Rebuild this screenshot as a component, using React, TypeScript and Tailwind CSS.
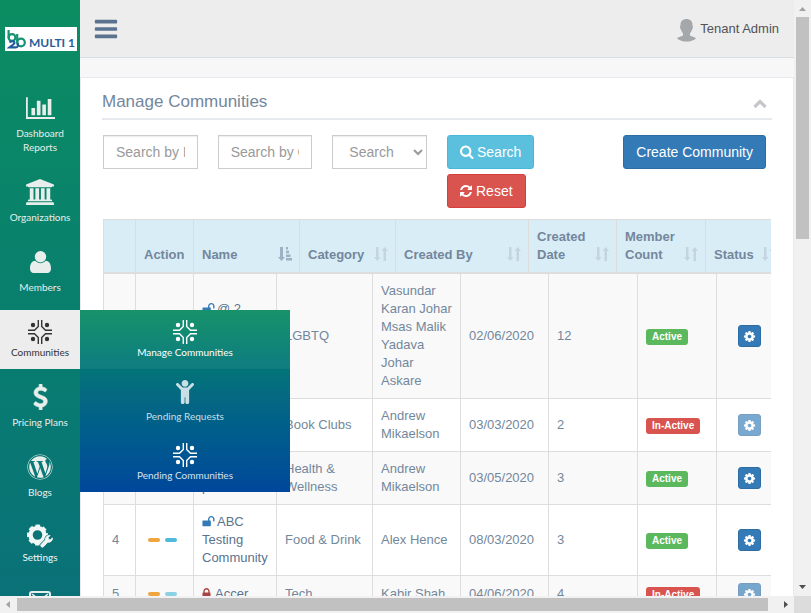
import type { ReactNode } from "react";
import { FaChild, FaWordpress } from "react-icons/fa";

type GlyphProps = { d: string; box?: string; className: string };

function Glyph({ d, box = "0 0 1792 1792", className }: GlyphProps) {
  return (
    <svg viewBox={box} className={className} fill="currentColor" aria-hidden="true">
      <path d={d} />
    </svg>
  );
}

const PATHS = {
  bars: "M1664 1344v128q0 26-19 45t-45 19h-1408q-26 0-45-19t-19-45v-128q0-26 19-45t45-19h1408q26 0 45 19t19 45zm0-512v128q0 26-19 45t-45 19h-1408q-26 0-45-19t-19-45v-128q0-26 19-45t45-19h1408q26 0 45 19t19 45zm0-512v128q0 26-19 45t-45 19h-1408q-26 0-45-19t-19-45v-128q0-26 19-45t45-19h1408q26 0 45 19t19 45z",
  search:
    "M1216 832q0-185-131.5-316.5t-316.5-131.5-316.5 131.5-131.5 316.5 131.5 316.5 316.5 131.5 316.5-131.5 131.5-316.5zm512 832q0 52-38 90t-90 38q-54 0-90-38l-343-342q-179 124-399 124-143 0-273.5-55.5t-225-150-150-225-55.5-273.5 55.5-273.5 150-225 225-150 273.5-55.5 273.5 55.5 225 150 150 225 55.5 273.5q0 220-124 399l343 343q37 37 37 90z",
  chart:
    "M640 896v512h-256v-512h256zm384-512v1024h-256v-1024h256zm1024 1152v128h-2048v-1536h128v1408h1920zm-640-896v768h-256v-768h256zm384-384v1152h-256v-1152h256z",
  bank: "M960 0l960 384v128h-128q0 26-20.5 45t-48.5 19h-1526q-28 0-48.5-19t-20.5-45h-128v-128zm-704 640h256v768h128v-768h256v768h128v-768h256v768h128v-768h256v768h59q28 0 48.5 19t20.5 45v64h-1664v-64q0-26 20.5-45t48.5-19h59v-768zm1595 960q28 0 48.5 19t20.5 45v128h-1920v-128q0-26 20.5-45t48.5-19h1782z",
  dollar:
    "M978 1185q0 153-99.5 263.5t-258.5 136.5v175q0 14-9 23t-23 9h-135q-13 0-22.5-9.5t-9.5-22.5v-175q-66-9-127.5-31t-101.5-44.5-74-48-46.5-37.5-17.5-18q-17-21-2-41l103-135q7-10 23-12 15-2 24 9l2 2q113 99 243 125 37 8 74 8 81 0 142.5-43t61.5-122q0-28-15-53t-33.5-42-58.5-37.5-66-32-80-32.5q-39-16-61.5-25t-61.5-26.5-62.5-31-56.5-35.5-53.5-42.5-43.5-49-35.5-58-21-66.5-8.5-78q0-138 98-242t255-134v-180q0-13 9.5-22.5t22.5-9.5h135q14 0 23 9t9 23v176q57 6 110.5 23t87 33.5 63.5 37.5 39 29 15 14q17 18 5 38l-81 146q-8 15-23 16-14 3-27-7-3-3-14.5-12t-39-26.5-58.5-32-74.5-26-85.5-11.5q-95 0-155 43t-60 111q0 26 8.5 48t29.5 41.5 39.5 33 56 31 60.5 27 70 27.5q53 20 81 31.5t76 35 75.5 42.5 62 50 53 63.5 31.5 76.5 13 94z",
  refresh:
    "M1639 1056q0 5-1 7-64 268-268 434.5t-478 166.5q-146 0-282.5-55t-243.5-157l-129 129q-19 19-45 19t-45-19-19-45v-448q0-26 19-45t45-19h448q26 0 45 19t19 45-19 45l-137 137q71 66 161 102t187 36q134 0 250-65t186-179q11-17 53-117 8-23 30-23h192q13 0 22.5 9.5t9.5 22.5zm25-800v448q0 26-19 45t-45 19h-448q-26 0-45-19t-19-45 19-45l138-138q-148-137-349-137-134 0-250 65t-186 179q-11 17-53 117-8 23-30 23h-199q-13 0-22.5-9.5t-9.5-22.5v-7q65-268 270-434.5t480-166.5q146 0 284 55.5t245 156.5l130-129q19-19 45-19t45 19 19 45z",
  cog: "M1152 896q0-106-75-181t-181-75-181 75-75 181 75 181 181 75 181-75 75-181zm512-109v222q0 12-8 23t-20 13l-185 28q-19 54-39 91 35 50 107 138 10 12 10 25t-9 23q-27 37-99 108t-94 71q-12 0-26-9l-138-108q-44 23-91 38-16 136-29 186-7 28-36 28h-222q-14 0-24.5-8.5t-11.5-21.5l-28-184q-49-16-90-37l-141 107q-10 9-25 9-14 0-25-11-126-114-165-168-7-10-7-23 0-12 8-23 15-21 51-66.5t54-70.5q-27-50-41-99l-183-27q-13-2-21-12.5t-8-23.5v-222q0-12 8-23t19-13l186-28q14-46 39-92-40-57-107-138-10-12-10-24 0-10 9-23 26-36 98.5-107.5t94.5-71.5q13 0 26 10l138 107q44-23 91-38 16-136 29-186 7-28 36-28h222q14 0 24.5 8.5t11.5 21.5l28 184q49 16 90 37l142-107q9-9 24-9 13 0 25 10 129 119 165 170 7 8 7 22 0 12-8 23-15 21-51 66.5t-54 70.5q26 50 41 98l183 28q13 2 21 12.5t8 23.5z",
  unlock:
    "M1728 576v256q0 26-19 45t-45 19h-64q-26 0-45-19t-19-45v-256q0-106-75-181t-181-75-181 75-75 181v192h96q40 0 68 28t28 68v576q0 40-28 68t-68 28h-960q-40 0-68-28t-28-68v-576q0-40 28-68t68-28h672v-192q0-185 131.5-316.5t316.5-131.5 316.5 131.5 131.5 316.5z",
  lock: "M640 768h512v-192q0-106-75-181t-181-75-181 75-75 181v192zm832 96v576q0 40-28 68t-68 28h-960q-40 0-68-28t-28-68v-576q0-40 28-68t68-28h32v-192q0-184 132-316t316-132 316 132 132 316v192h32q40 0 68 28t28 68z",
};

function CommunityIcon() {
  return (
    <svg viewBox="0 0 24 24" className="size-6" aria-hidden="true">
      <g fill="none" stroke="currentColor" strokeWidth="1.400">
        <path d="M10.300 0v6.500L6.500 10.300H0" />
        <path d="M13.700 0v6.500L17.500 10.300H24" />
        <path d="M10.300 24v-6.500L6.500 13.700H0" />
        <path d="M13.700 24v-6.500l3.800-3.800H24" />
      </g>
      <g fill="currentColor">
        <circle cx="5" cy="5" r="2.200" />
        <circle cx="19" cy="5" r="2.200" />
        <circle cx="5" cy="19" r="2.200" />
        <circle cx="19" cy="19" r="2.200" />
      </g>
    </svg>
  );
}

function UserIcon() {
  return (
    <svg viewBox="0 0 21 22" className="h-[22px] w-[21px]" fill="currentColor" aria-hidden="true">
      <path d="M10.500 0a5.700 5.700 0 0 1 0 11.400 5.700 5.700 0 0 1 0-11.400z" />
      <path d="M5.300 9.800c1.400 1.600 3.200 2.500 5.200 2.500s3.800-.9 5.200-2.500c3.900.2 5.300 4 5.300 8 0 2.600-1.500 4.200-3.600 4.200H3.600C1.500 22 0 20.400 0 17.800c0-4 1.400-7.800 5.300-8z" />
    </svg>
  );
}

function SettingsIcon() {
  const wrench = "M14 20.500l4.500-4.700a3.800 3.800 0 0 1 4.600-4.300l-1.900 2.100.4 1.800 1.800.4 2-2a3.800 3.800 0 0 1-4.600 4.400l-4.500 4.700a1.700 1.700 0 0 1-2.300-2.400z";
  return (
    <svg viewBox="0 0 26 24" className="h-6 w-[26px]" aria-hidden="true">
      <g fill="none" stroke="currentColor">
        <circle cx="10.500" cy="11" r="7" strokeWidth="4.400" />
        <circle cx="10.500" cy="11" r="9.300" strokeWidth="2.400" strokeDasharray="4.500 2.800" strokeDashoffset="2.250" />
      </g>
      <path d={wrench} fill="#0a7377" stroke="#0a7377" strokeWidth="2" />
      <path d={wrench} fill="currentColor" stroke="currentColor" strokeWidth="0.800" />
    </svg>
  );
}

function EnvelopeIcon() {
  return (
    <svg viewBox="0 0 22 22" className="size-[22px]" fill="none" stroke="currentColor" aria-hidden="true">
      <rect x="1" y="1" width="20" height="15" rx="2" strokeWidth="2" />
      <path d="M3 3l8 6.500L19 3M3 15l5.500-6M19 15l-5.500-6" strokeWidth="1.600" />
    </svg>
  );
}

type NavItemProps = { label: string; icon: ReactNode; pad?: string };

function NavItem({ label, icon, pad = "px-3" }: NavItemProps) {
  return (
    <li>
      <a href="#" className={`block py-2.5 text-center text-[#e7eeec] ${pad}`}>
        <span className="flex h-9 items-center justify-center">{icon}</span>
        {label}
      </a>
    </li>
  );
}

function Sidebar() {
  return (
    <aside className="z-10 w-20 shrink-0 bg-linear-to-b from-[#0c8d61] to-[#0a7178] font-['Lato',sans-serif] text-[10px] leading-[14px]">
      <div className="pt-[27px] pr-[3px] pb-[29px] pl-[5px]">
        <a href="#" className="flex h-6 items-center gap-[3px] bg-white pl-[2px] text-xs font-bold whitespace-nowrap text-[#2a5d9c]">
          <svg viewBox="0 0 19 19" className="size-[19px] shrink-0" fill="none" aria-hidden="true">
            <g stroke="#159271" strokeWidth="2.200">
              <path d="M1.600 0v8" />
              <circle cx="5" cy="7.500" r="3.400" />
              <circle cx="14" cy="12.500" r="3.800" />
              <path d="M10.200 4v8.500" />
            </g>
            <path d="M2.500 12.500c2-2 6-1.500 4.600 1-.8 1.400-3 2.500-4.600 3.800H9c2 0 2.500-2 1.500-4.300" stroke="#235c9e" strokeWidth="2.200" />
          </svg>
          <span className="pt-2">MULTI 1</span>
        </a>
      </div>
      <nav>
        <ul>
          <NavItem label="Dashboard Reports" icon={<Glyph d={PATHS.chart} box="0 0 2048 1792" className="h-[26px] w-[29px]" />} />
          <NavItem label="Organizations" pad="px-0" icon={<Glyph d={PATHS.bank} box="0 0 1920 1792" className="h-[26px] w-7" />} />
          <NavItem label="Members" icon={<UserIcon />} />
          <li className="relative mt-1.5">
            <a href="#" className="block bg-[#ededed] pt-[9px] pb-2.5 text-center text-[#333]">
              <span className="flex h-[26px] items-start justify-center pt-px">
                <CommunityIcon />
              </span>
              Communities
            </a>
            <ul className="absolute top-0 left-20 w-[210px] bg-linear-to-b from-[#0a8c60] via-[#066783] to-[#00479b] text-center">
              <li>
                <a href="#" className="block bg-white/6 pt-[9px] pb-2.5 text-white">
                  <span className="flex h-[26px] items-start justify-center pt-px">
                    <CommunityIcon />
                  </span>
                  Manage Communities
                </a>
              </li>
              <li>
                <a href="#" className="block pt-1.5 pb-2.5 text-[#c9dfe5]">
                  <span className="flex h-[34px] items-center justify-center">
                    <FaChild className="h-6 w-5" />
                  </span>
                  Pending Requests
                </a>
              </li>
              <li>
                <a href="#" className="block pt-[9px] pb-2.5 text-[#d3e2f0]">
                  <span className="flex h-[26px] items-start justify-center pt-px text-white">
                    <CommunityIcon />
                  </span>
                  Pending Communities
                </a>
              </li>
            </ul>
          </li>
          <NavItem
            label="Pricing Plans"
            pad="px-0"
            icon={
              <svg viewBox="0 0 1024 1792" className="h-[26px] w-[15px]" fill="currentColor" stroke="currentColor" strokeWidth="50" aria-hidden="true">
                <path d={PATHS.dollar} />
              </svg>
            }
          />
          <NavItem label="Blogs" icon={<FaWordpress className="size-[26px]" />} />
          <li className="mt-1.5">
            <a href="#" className="block pt-[9px] pb-2.5 text-center text-[#f2f7f6]">
              <span className="flex h-[26px] items-start justify-center">
                <SettingsIcon />
              </span>
              Settings
            </a>
          </li>
          <li>
            <a href="#" aria-label="Messages" className="flex justify-center pt-[17px] text-[#e7eeec]">
              <EnvelopeIcon />
            </a>
          </li>
        </ul>
      </nav>
    </aside>
  );
}

function TopBar() {
  return (
    <header className="flex h-[58px] shrink-0 items-start justify-between border-b border-[#d9dee4] bg-[#ededed] pr-[15px] pl-[13px]">
      <button type="button" aria-label="Toggle menu" className="mt-4 text-[#5a738e]">
        <Glyph d={PATHS.bars} className="size-[26px]" />
      </button>
      <a href="#" className="mt-[19px] flex items-start gap-1 leading-5 text-[#515356]">
        <svg viewBox="0 0 19 23" className="h-[23px] w-[19px]" fill="#a4a8ab" aria-hidden="true">
          <path d="M9.500 0C6 0 3.500 2 3.500 6c0 1-.6 1.500-.5 2.500.1 1.200.8 1.500 1.100 2.500.5 1.800 1.400 2.700 1.900 3.300v2.200C4.500 17.500 1 18 0 19.500 2 21.500 6 22.600 9.500 22.600s7.500-1.100 9.500-3.100c-1-1.500-4.500-2-6-3v-2.200c.5-.6 1.400-1.500 1.900-3.300.3-1 1-1.300 1.100-2.500.1-1-.5-1.500-.5-2.500 0-4-2.500-6-6-6z" />
        </svg>
        Tenant Admin
      </a>
    </header>
  );
}

function Filters() {
  const field =
    "h-[34px] w-full border border-[#ccc] bg-white px-3 text-sm text-[#999] shadow-[inset_0_1px_1px_rgba(0,0,0,0.075)] outline-none placeholder:text-[#999]";
  return (
    <form className="-mx-[9px] grid grid-cols-6 pt-[15px] text-sm" onSubmit={(e) => e.preventDefault()}>
      <div className="px-2.5">
        <input type="text" aria-label="Search by Name" placeholder="Search by Name" className={field} />
      </div>
      <div className="px-2.5">
        <input type="text" aria-label="Search by Category" placeholder="Search by Category" className={field} />
      </div>
      <div className="px-2.5">
        <select aria-label="Search by status" className={field}>
          <option>Search</option>
        </select>
      </div>
      <div className="flex flex-col items-start gap-[5px] px-2.5 text-white">
        <button type="submit" className="flex h-[34px] items-center gap-[3px] rounded-[3px] border border-[#46b8da] bg-[#5bc0de] px-3 whitespace-nowrap">
          <Glyph d={PATHS.search} box="64 64 1728 1728" className="size-[14px]" />
          Search
        </button>
        <button type="reset" className="flex h-[34px] items-center gap-[3px] rounded-[3px] border border-[#d43f3a] bg-[#d9534f] pr-3 pl-[11px] whitespace-nowrap">
          <Glyph d={PATHS.refresh} className="size-[14px]" />
          Reset
        </button>
      </div>
      <div className="col-span-2 flex items-start justify-end pr-[15px]">
        <button type="button" className="h-[34px] rounded-[3px] border border-[#2e6da4] bg-[#337ab7] px-3 whitespace-nowrap text-white">
          Create Community
        </button>
      </div>
    </form>
  );
}

type SortMark = "none" | "idle" | "active";

function SortIcon({ mark }: { mark: SortMark }) {
  if (mark === "none") return null;
  if (mark === "active") {
    return (
      <svg viewBox="0 0 14 14" className="mb-[3px] size-[14px] shrink-0 text-[#9db1c4]" fill="currentColor" aria-hidden="true">
        <path d="M2 0h3v10h2l-3.500 4L0 10h2z" />
        <path d="M8 0h2v2.500H8zM8 3.700h3v2.500H8zM8 7.400h4.500v2.500H8zM8 11.100h6v2.500H8z" />
      </svg>
    );
  }
  return (
    <svg viewBox="0 0 14 14" className="mb-[3px] size-[14px] shrink-0 text-[#c3d5e1]" fill="currentColor" aria-hidden="true">
      <path d="M2 0h2.500v10h2L3.200 14 0 10h2z" />
      <path d="M9.500 14H12V4h2l-3.200-4L7.500 4h2z" />
    </svg>
  );
}

const HEADINGS: { label: string; width: string; mark: SortMark }[] = [
  { label: "", width: "w-8", mark: "none" },
  { label: "Action", width: "w-[58px]", mark: "none" },
  { label: "Name", width: "w-[106px]", mark: "active" },
  { label: "Category", width: "w-24", mark: "idle" },
  { label: "Created By", width: "w-[133px]", mark: "idle" },
  { label: "Created Date", width: "w-[88px]", mark: "idle" },
  { label: "Member Count", width: "w-[89px]", mark: "idle" },
  { label: "Status", width: "w-[78px]", mark: "idle" },
];

type Row = {
  id: number;
  open: boolean;
  name: string[];
  category: string;
  by: string;
  date: string;
  members: number;
  active: boolean;
};

const ROWS: Row[] = [
  { id: 1, open: true, name: ["@ 2", "Pride", "Circle", "Forum"], category: "LGBTQ", by: "Vasundar Karan Johar Msas Malik Yadava Johar Askare", date: "02/06/2020", members: 12, active: true },
  { id: 2, open: true, name: ["Book", "Readers"], category: "Book Clubs", by: "Andrew Mikaelson", date: "03/03/2020", members: 2, active: false },
  { id: 3, open: true, name: ["Care", "partner"], category: "Health & Wellness", by: "Andrew Mikaelson", date: "03/05/2020", members: 3, active: true },
  { id: 4, open: true, name: ["ABC", "Testing", "Community"], category: "Food & Drink", by: "Alex Hence", date: "08/03/2020", members: 3, active: true },
  { id: 5, open: false, name: ["Accer"], category: "Tech", by: "Kabir Shah", date: "04/06/2020", members: 4, active: false },
];

const BODY_WIDTHS = ["w-8", "w-[58px]", "w-[83px]", "w-24", "w-[88px]", "w-[88px]", "w-[89px]", "w-[79px]", "w-[65px]"];

function CommunityTable() {
  const cell = "border-l border-[#ddd] p-2 align-middle";
  return (
    <div className="mx-px mt-[11px] overflow-hidden">
      <table className="w-[680px] table-fixed border-separate border-spacing-0 text-left">
        <thead>
          <tr>
            {HEADINGS.map((h) => (
              <th key={h.label} className={`${h.width} border-t border-b-2 border-l border-[#ddd] bg-[#d9edf7] p-2 pr-[7px] align-bottom font-bold`}>
                <span className="flex items-end justify-between">
                  {h.label}
                  <SortIcon mark={h.mark} />
                </span>
              </th>
            ))}
          </tr>
        </thead>
      </table>
      <table className="w-[678px] table-fixed border-separate border-spacing-0">
        <colgroup>
          {BODY_WIDTHS.map((w, i) => (
            <col key={i} className={w} />
          ))}
        </colgroup>
        <tbody className="[&>tr+tr>td]:border-t">
          {ROWS.map((r) => (
            <tr key={r.id} className="odd:bg-[#f9f9f9]">
              <td className={cell}>{r.id}</td>
              <td className={cell}>
                <span className="flex gap-[5px] pl-1">
                  <button type="button" aria-label={`Edit ${r.name[0]}`} className="h-1 w-3 rounded-[2px] bg-[#f0a53e]" />
                  <button type="button" aria-label={`View ${r.name[0]}`} className={`h-1 w-3 rounded-[2px] bg-[#4fbbdb] ${r.active ? "" : "opacity-65"}`} />
                </span>
              </td>
              <td className={`${cell} text-[#5a738e]`}>
                {r.open ? (
                  <Glyph d={PATHS.unlock} className="mr-0.5 inline size-[13px] align-[-2px] text-[#337ab7]" />
                ) : (
                  <Glyph d={PATHS.lock} box="256 0 1280 1792" className="mr-1 inline h-[13px] w-[9px] align-[-2px] text-[#a94442]" />
                )}
                {r.name.map((line, i) => (
                  <span key={line}>
                    {i > 0 && <br />}
                    {line}
                  </span>
                ))}
              </td>
              <td className={cell}>{r.category}</td>
              <td className={cell}>{r.by}</td>
              <td className={cell}>{r.date}</td>
              <td className={cell}>{r.members}</td>
              <td className={cell}>
                <span
                  className={`mt-0.5 block w-fit rounded-[3px] px-1.5 text-[10px] leading-4 font-bold text-white ${r.active ? "bg-[#5cb85c]" : "bg-[#d9534f]"}`}
                >
                  {r.active ? "Active" : "In-Active"}
                </span>
              </td>
              <td className="border-l border-[#ddd] align-middle">
                <button
                  type="button"
                  aria-label={`Manage ${r.name[0]}`}
                  className={`mx-auto my-[7px] flex h-[22px] w-[23px] items-center justify-center rounded-[3px] border border-[#2e6da4] bg-[#337ab7] text-white ${r.active ? "" : "opacity-65"}`}
                >
                  <Glyph d={PATHS.cog} className="size-[13px]" />
                </button>
              </td>
            </tr>
          ))}
        </tbody>
      </table>
    </div>
  );
}

function VerticalScrollbar() {
  return (
    <div className="flex w-[17px] shrink-0 flex-col items-center bg-[#f1f1f1]" aria-hidden="true">
      <svg viewBox="0 0 17 17" className="size-[17px]">
        <path d="M5 11h7L8.500 7z" fill="#a3a3a3" />
      </svg>
      <div className="min-h-0 w-[13px] flex-1">
        <div className="h-[39.5%] bg-[#c1c1c1]" />
      </div>
      <svg viewBox="0 0 17 17" className="size-[17px]">
        <path d="M5 6h7l-3.500 4z" fill="#505050" />
      </svg>
    </div>
  );
}

function HorizontalScrollbar() {
  return (
    <div className="flex h-[17px] shrink-0 items-center bg-[#f1f1f1]" aria-hidden="true">
      <svg viewBox="0 0 17 17" className="size-[17px]">
        <path d="M10 5v7L6 8.500z" fill="#a3a3a3" />
      </svg>
      <div className="h-[13px] flex-1">
        <div className="h-full w-[98.8%] bg-[#c1c1c1]" />
      </div>
      <svg viewBox="0 0 17 17" className="size-[17px]">
        <path d="M7 5v7l4-3.500z" fill="#505050" />
      </svg>
      <div className="size-[17px] bg-[#dcdcdc]" />
    </div>
  );
}

export default function App() {
  return (
    <div className="flex h-screen flex-col overflow-hidden font-['Liberation_Sans',Arial,sans-serif] text-[13px] leading-[18px] text-[#73879c]">
      <div className="flex min-h-0 flex-1">
        <div className="flex min-w-0 flex-1 overflow-hidden">
          <Sidebar />
          <div className="flex min-w-0 flex-1 flex-col bg-[#f7f7f7]">
            <TopBar />
            <main className="mt-[19px] flex-1 border border-[#e6e9ed] bg-white px-[21px]">
              <div className="flex h-[42px] items-center justify-between border-b-2 border-[#e6e9ed] pt-2">
                <h2 className="text-[17px] leading-6">Manage Communities</h2>
                <button type="button" aria-label="Collapse panel" className="mt-1 mr-[5px] text-[#c5c7cb]">
                  <svg viewBox="0 0 14 10" className="h-2.5 w-[14px]" fill="none" stroke="currentColor" strokeWidth="3.200" aria-hidden="true">
                    <path d="M1.500 8L7 2.500 12.500 8" />
                  </svg>
                </button>
              </div>
              <Filters />
              <CommunityTable />
            </main>
          </div>
        </div>
        <VerticalScrollbar />
      </div>
      <HorizontalScrollbar />
    </div>
  );
}
